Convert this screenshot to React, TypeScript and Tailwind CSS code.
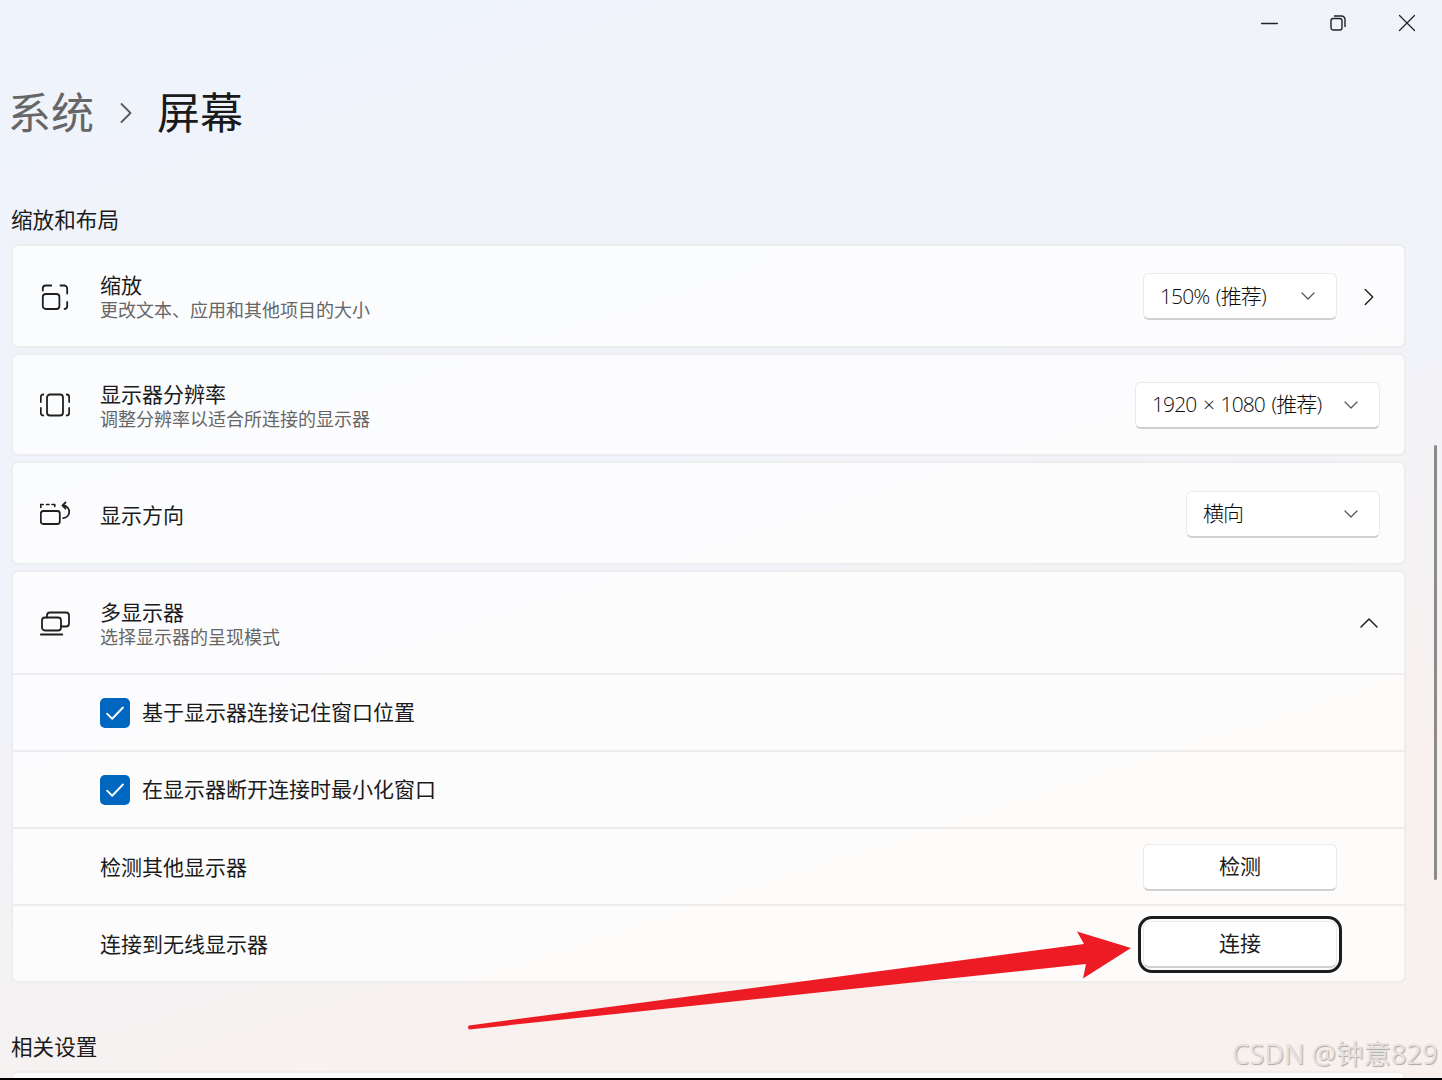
import { ChevronDown, ChevronRight, ChevronUp, Minus, X } from "lucide-react";
import type { ReactNode } from "react";

const fontStack = "font-['Open_Sans','Noto_Sans_CJK_SC',sans-serif]";

function ScaleIcon() {
  return (
    <svg width="30" height="30" viewBox="0 0 30 30" fill="none" stroke="#1f1f1f" strokeWidth="1.8" strokeLinecap="round">
      <rect x="2.8" y="12" width="16.6" height="15" rx="3" />
      <path d="M2.8 8.5V6.5a3 3 0 0 1 3-3h5.5M20.5 3.5h3.7a3 3 0 0 1 3 3v5M27.2 20v4a3 3 0 0 1-2.6 3" />
    </svg>
  );
}

function ResolutionIcon() {
  return (
    <svg width="30" height="30" viewBox="0 0 30 30" fill="none" stroke="#1f1f1f" strokeWidth="1.8" strokeLinecap="round">
      <rect x="7" y="4.5" width="16" height="21" rx="3" />
      <path d="M0.8 12V7a2.5 2.5 0 0 1 2.5-2.5M0.8 18v5a2.5 2.5 0 0 0 2.5 2.5M29.2 12V7a2.5 2.5 0 0 0-2.5-2.5M29.2 18v5a2.5 2.5 0 0 1-2.5 2.5" />
    </svg>
  );
}

function OrientationIcon() {
  return (
    <svg width="30" height="30" viewBox="0 0 30 30" fill="none" stroke="#1f1f1f" strokeWidth="1.8" strokeLinecap="round">
      <rect x="0.8" y="12" width="19" height="13" rx="2.5" />
      <path d="M0.8 8.5V5.5h2.4M6.5 5.5h2.5M12 5.5h2.8M14.8 5.5v2" strokeWidth="1.6" />
      <path d="M23.5 6.5a6.5 6.5 0 0 1 5.7 6.5 6.5 6.5 0 0 1-6 6.2" />
      <path d="M25.5 3.5l-3 3 3 3" />
    </svg>
  );
}

function MultiMonitorIcon() {
  return (
    <svg width="30" height="30" viewBox="0 0 30 30" fill="none" stroke="#1f1f1f" strokeWidth="1.8" strokeLinecap="round">
      <path d="M7 9.5V7.5a3 3 0 0 1 3-3h16a3 3 0 0 1 3 3v8a3 3 0 0 1-3 3h-5" />
      <rect x="2" y="9.5" width="19" height="13" rx="3" />
      <path d="M0.8 26.5h21.5" />
    </svg>
  );
}

function Check() {
  return (
    <span className="flex h-[30px] w-[30px] items-center justify-center rounded-[5px] bg-[#0067c0]">
      <svg width="22" height="22" viewBox="0 0 18 18" fill="none" stroke="#ffffff" strokeWidth="1.5" strokeLinecap="round" strokeLinejoin="round">
        <path d="M2.5 9.5l4.2 4.2L15.5 4.5" />
      </svg>
    </span>
  );
}

function Dropdown({ label, width }: { label: string; width: string }) {
  return (
    <div className={`flex h-[47px] ${width} items-center justify-between rounded-[6px] border border-[#eceae9] border-b-2 border-b-[#d0d0d0] bg-white/90 pl-4 pr-4 text-[21px] font-light text-[#0c0c0c]`}>
      <span className="whitespace-pre tracking-[-0.9px] [word-spacing:2px]">{label}</span>
      <ChevronDown size={24} strokeWidth={1.2} color="#555555" />
    </div>
  );
}

function ActionButton({ label }: { label: string }) {
  return (
    <div className="flex h-[47px] w-[194px] items-center justify-center rounded-[6px] border border-[#eceae9] border-b-2 border-b-[#d0d0d0] bg-white text-[21px] text-[#1c1c1c]">
      {label}
    </div>
  );
}

function Card({ children }: { children: ReactNode }) {
  return (
    <div className="mx-[11px] flex h-[103.5px] w-[1395px] items-center rounded-[7px] border-2 border-black/[0.06] bg-white/75 pl-[27px] pt-[2px]">
      {children}
    </div>
  );
}

function Title({ title, sub }: { title: string; sub?: string }) {
  return (
    <div className="ml-[30px] mt-[1px] flex flex-col">
      <span className="text-[21px] leading-[26px] text-[#1b1b1b]">{title}</span>
      {sub && <span className="text-[18px] leading-[24px] text-[#666666]">{sub}</span>}
    </div>
  );
}

function SubRow({ children }: { children: ReactNode }) {
  return (
    <div className="flex h-[77px] items-center border-t-2 border-black/[0.06] pl-[87px] pr-[67px] pt-[2px] text-[21px] text-[#1b1b1b]">
      {children}
    </div>
  );
}

export default function App() {
  return (
    <div className={`relative flex h-[1080px] w-[1442px] flex-col overflow-hidden bg-[linear-gradient(162deg,#eff3fb_0%,#f1f3f9_50%,#f9f1ed_82%)] ${fontStack}`}>
      <div className="flex-1 overflow-hidden">
        {/* title bar */}
        <div className="flex h-[46px] items-center justify-end pr-[20px]">
          <Minus size={27} strokeWidth={1.2} color="#222222" />
          <svg className="ml-[47px]" width="16" height="16" viewBox="0 0 16 16" fill="none" stroke="#222222" strokeWidth="1.4">
            <rect x="1" y="3.5" width="11" height="11.5" rx="2.2" />
            <path d="M4 1h7.5A3.5 3.5 0 0 1 15 4.5V12" />
          </svg>
          <X className="ml-[46px]" size={30} strokeWidth={1} color="#222222" />
        </div>

        <div className="ml-[8px] mt-[37px] flex h-[60px] items-center text-[43px] leading-[60px]">
          <span className="text-[#666666]">系统</span>
          <ChevronRight size={36} strokeWidth={1.2} color="#5a5a5a" className="ml-[14px] mr-[13px]" />
          <span className="text-[#1a1a1a]">屏幕</span>
        </div>

        <div className="ml-[11px] mt-[62px] h-[30px] text-[21.6px] leading-[30px] text-[#1b1b1b]">缩放和布局</div>

        <div className="mt-[9px] flex flex-col gap-[5.17px]">
          <Card>
            <ScaleIcon />
            <Title title="缩放" sub="更改文本、应用和其他项目的大小" />
            <div className="ml-auto flex items-center pr-[20px]">
              <Dropdown label="150% (推荐)" width="w-[194px]" />
              <ChevronRight size={30} strokeWidth={1.1} color="#1f1f1f" className="ml-[17px]" />
            </div>
          </Card>
          <Card>
            <ResolutionIcon />
            <Title title="显示器分辨率" sub="调整分辨率以适合所连接的显示器" />
            <div className="ml-auto pr-[24px]">
              <Dropdown label="1920 × 1080 (推荐)" width="w-[245px]" />
            </div>
          </Card>
          <Card>
            <OrientationIcon />
            <Title title="显示方向" />
            <div className="ml-auto pr-[24px]">
              <Dropdown label="横向" width="w-[194px]" />
            </div>
          </Card>

          <div className="mx-[11px] w-[1395px] rounded-[7px] border-2 border-black/[0.06] bg-white/75">
            <div className="flex h-[101px] items-center pl-[27px] pr-[19px] pt-[2px]">
              <MultiMonitorIcon />
              <Title title="多显示器" sub="选择显示器的呈现模式" />
              <ChevronUp size={32} strokeWidth={1.1} color="#1f1f1f" className="ml-auto" />
            </div>
            <SubRow>
              <Check />
              <span className="-mt-[2px] ml-3">基于显示器连接记住窗口位置</span>
            </SubRow>
            <SubRow>
              <Check />
              <span className="-mt-[2px] ml-3">在显示器断开连接时最小化窗口</span>
            </SubRow>
            <SubRow>
              <span>检测其他显示器</span>
              <div className="ml-auto">
                <ActionButton label="检测" />
              </div>
            </SubRow>
            <SubRow>
              <span>连接到无线显示器</span>
              <div className="ml-auto rounded-[9px] outline-3 outline-offset-2 outline-[#1c1c1c]">
                <ActionButton label="连接" />
              </div>
            </SubRow>
          </div>
        </div>

        <div className="ml-[11px] mt-[49px] h-[30px] text-[21.6px] leading-[30px] text-[#1b1b1b]">相关设置</div>
        <div className="mx-[11px] mt-[9px] h-[60px] w-[1395px] rounded-[7px] border-2 border-black/[0.06] bg-white/75" />
      </div>
      <div className="h-[2px] bg-black" />

      {/* annotation arrow drawn over the screenshot */}
      <svg className="absolute left-0 top-0" width="1442" height="1080" viewBox="0 0 1442 1080" fill="#ed1c24">
        <path d="M469 1025.5L1084 944L1077 931.5L1131 948L1083 978.5L1086 964L469 1029.5Q467 1027 469 1025.5Z" />
      </svg>

      {/* scrollbar */}
      <div className="absolute left-[1434px] top-[445px] h-[435px] w-[3px] rounded-full bg-[#8a8a8a]" />

      {/* watermark */}
      <div className="absolute left-[1232px] top-[1035px] whitespace-nowrap text-[27.3px] leading-[38px] text-[#e4e2e0] [text-shadow:1px_1px_1px_#a9a9a9]">
        CSDN @钟意829
      </div>
    </div>
  );
}
